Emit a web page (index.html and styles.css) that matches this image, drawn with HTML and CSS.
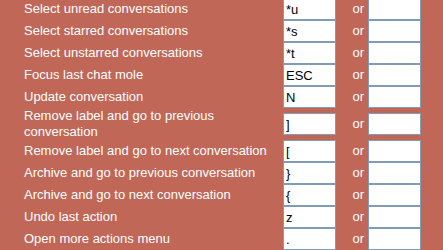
FILE: index.html
```html
<!DOCTYPE html>
<html>
<head>
<meta charset="utf-8">
<link rel="stylesheet" href="styles.css">
</head>
<body>
<table class="keys">
<tr><td class="label">Select unread conversations</td><td class="key"><input class="field" value="*u"></td><td class="or">or</td><td class="key"><input class="field" value=""></td></tr>
<tr><td class="label">Select starred conversations</td><td class="key"><input class="field" value="*s"></td><td class="or">or</td><td class="key"><input class="field" value=""></td></tr>
<tr><td class="label">Select unstarred conversations</td><td class="key"><input class="field" value="*t"></td><td class="or">or</td><td class="key"><input class="field" value=""></td></tr>
<tr><td class="label">Focus last chat mole</td><td class="key"><input class="field" value="ESC"></td><td class="or">or</td><td class="key"><input class="field" value=""></td></tr>
<tr><td class="label">Update conversation</td><td class="key"><input class="field" value="N"></td><td class="or">or</td><td class="key"><input class="field" value=""></td></tr>
<tr><td class="label">Remove label and go to previous conversation</td><td class="key"><input class="field" value="]"></td><td class="or">or</td><td class="key"><input class="field" value=""></td></tr>
<tr><td class="label">Remove label and go to next conversation</td><td class="key"><input class="field" value="["></td><td class="or">or</td><td class="key"><input class="field" value=""></td></tr>
<tr><td class="label">Archive and go to previous conversation</td><td class="key"><input class="field" value="}"></td><td class="or">or</td><td class="key"><input class="field" value=""></td></tr>
<tr><td class="label">Archive and go to next conversation</td><td class="key"><input class="field" value="{"></td><td class="or">or</td><td class="key"><input class="field" value=""></td></tr>
<tr><td class="label">Undo last action</td><td class="key"><input class="field" value="z"></td><td class="or">or</td><td class="key"><input class="field" value=""></td></tr>
<tr><td class="label">Open more actions menu</td><td class="key"><input class="field" value="."></td><td class="or">or</td><td class="key"><input class="field" value=""></td></tr>
</table>
</body>
</html>
```
FILE: styles.css
```css
html, body {
  margin: 0;
  padding: 0;
  background: #c06757;
  overflow: hidden;
}
.keys {
  border-collapse: collapse;
  border-spacing: 0;
  margin-top: -2px;
  table-layout: fixed;
  width: 421px;
  font-family: "Liberation Sans", Arial, sans-serif;
  font-size: 13px;
  line-height: 16px;
}
.keys td {
  padding: 0;
  vertical-align: middle;
}
.label {
  width: 259px;
  padding-left: 24px !important;
  color: #ffffff;
}
.key {
  width: 53px;
  height: 22px;
}
.or {
  width: 32px;
  color: #ffffff;
  text-align: right;
  padding-right: 4px !important;
  box-sizing: border-box;
}
.field {
  display: block;
  box-sizing: border-box;
  width: 53px;
  height: 22px;
  margin: 0;
  padding: 0 2px;
  border: 1px solid #7f9db9;
  background: #ffffff;
  color: #000000;
  font-family: "Liberation Sans", Arial, sans-serif;
  font-size: 13px;
  outline: none;
}
```
